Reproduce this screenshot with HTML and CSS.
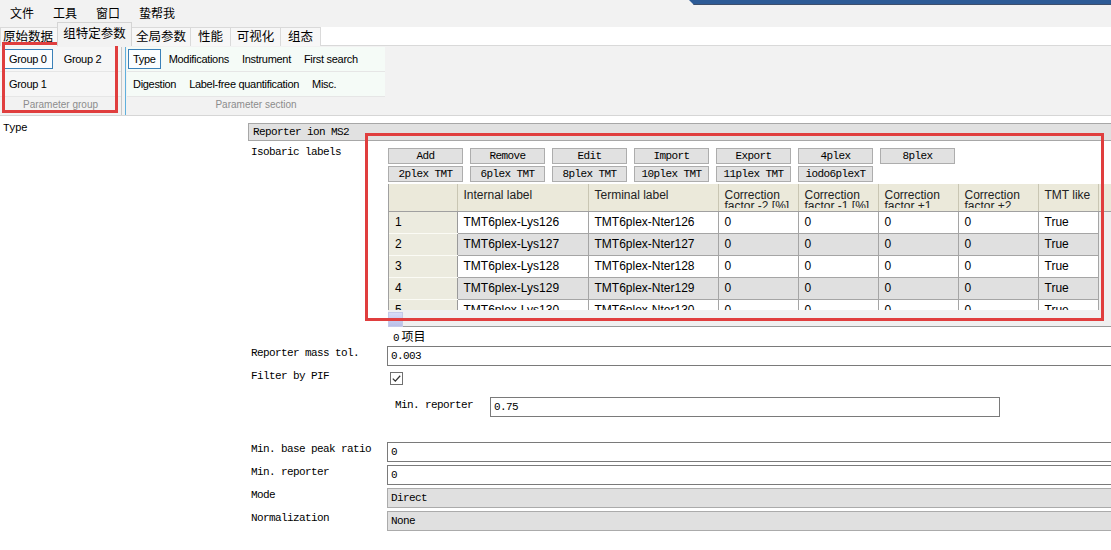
FILE: index.html
```html
<!DOCTYPE html>
<html lang="zh">
<head>
<meta charset="utf-8">
<title>Group-specific parameters</title>
<link rel="stylesheet" href="styles.css">
</head>
<body>
<div class="app">
  <div class="accent"></div>

  <div class="menubar">
    <span class="menu">文件</span>
    <span class="menu">工具</span>
    <span class="menu">窗口</span>
    <span class="menu">蛰帮我</span>
  </div>

  <div class="tabs">
    <div class="tab w1">原始数据</div>
    <div class="tab active w2">组特定参数</div>
    <div class="tab w3">全局参数</div>
    <div class="tab w4">性能</div>
    <div class="tab w5">可视化</div>
    <div class="tab w6">组态</div>
  </div>

  <div class="ribbon">
    <div class="rgroup group-panel">
      <div class="rrow">
        <span class="ritem sel">Group 0</span>
        <span class="ritem">Group 2</span>
      </div>
      <div class="rrow">
        <span class="ritem">Group 1</span>
      </div>
      <div class="rcaption">Parameter group</div>
    </div>
    <div class="rsep"></div>
    <div class="rgroup section-panel">
      <div class="rrow">
        <span class="ritem sel">Type</span>
        <span class="ritem">Modifications</span>
        <span class="ritem">Instrument</span>
        <span class="ritem">First search</span>
      </div>
      <div class="rrow">
        <span class="ritem">Digestion</span>
        <span class="ritem">Label-free quantification</span>
        <span class="ritem">Misc.</span>
      </div>
      <div class="rcaption">Parameter section</div>
    </div>
  </div>

  <div class="content">
    <div class="type-row">
      <div class="type-label">Type</div>
      <div class="field gray wide">Reporter ion MS2</div>
    </div>

    <div class="props">
      <div class="prop">
        <div class="plabel">Isobaric labels</div>
        <div class="pvalue iso">
          <div class="btnrow">
            <span class="btn">Add</span>
            <span class="btn">Remove</span>
            <span class="btn">Edit</span>
            <span class="btn">Import</span>
            <span class="btn">Export</span>
            <span class="btn">4plex</span>
            <span class="btn">8plex</span>
          </div>
          <div class="btnrow">
            <span class="btn">2plex TMT</span>
            <span class="btn">6plex TMT</span>
            <span class="btn">8plex TMT</span>
            <span class="btn">10plex TMT</span>
            <span class="btn">11plex TMT</span>
            <span class="btn">iodo6plexT</span>
          </div>
          <div class="grid">
            <table class="labels">
              <colgroup>
                <col class="c-rh"><col class="c-int"><col class="c-term">
                <col class="c-cf"><col class="c-cf"><col class="c-cf"><col class="c-cf">
                <col class="c-tmt"><col class="c-fill">
              </colgroup>
              <thead>
                <tr>
                  <th class="rh"></th>
                  <th><div class="hd">Internal label</div></th>
                  <th><div class="hd">Terminal label</div></th>
                  <th><div class="hd">Correction factor -2 [%]</div></th>
                  <th><div class="hd">Correction factor -1 [%]</div></th>
                  <th><div class="hd">Correction factor +1</div></th>
                  <th><div class="hd">Correction factor +2</div></th>
                  <th><div class="hd">TMT like</div></th>
                  <th class="fill"></th>
                </tr>
              </thead>
              <tbody>
                <tr><td class="rh">1</td><td>TMT6plex-Lys126</td><td>TMT6plex-Nter126</td><td>0</td><td>0</td><td>0</td><td>0</td><td>True</td><td class="fill"></td></tr>
                <tr class="alt"><td class="rh">2</td><td>TMT6plex-Lys127</td><td>TMT6plex-Nter127</td><td>0</td><td>0</td><td>0</td><td>0</td><td>True</td><td class="fill"></td></tr>
                <tr><td class="rh">3</td><td>TMT6plex-Lys128</td><td>TMT6plex-Nter128</td><td>0</td><td>0</td><td>0</td><td>0</td><td>True</td><td class="fill"></td></tr>
                <tr class="alt"><td class="rh">4</td><td>TMT6plex-Lys129</td><td>TMT6plex-Nter129</td><td>0</td><td>0</td><td>0</td><td>0</td><td>True</td><td class="fill"></td></tr>
                <tr><td class="rh">5</td><td>TMT6plex-Lys130</td><td>TMT6plex-Nter130</td><td>0</td><td>0</td><td>0</td><td>0</td><td>True</td><td class="fill"></td></tr>
              </tbody>
            </table>
          </div>
          <div class="hscroll"><div class="thumb"></div></div>
          <div class="count">0<span class="cjk">项目</span></div>
        </div>
      </div>

      <div class="prop">
        <div class="plabel">Reporter mass tol.</div>
        <div class="pvalue"><div class="field input wide">0.003</div></div>
      </div>

      <div class="prop pif">
        <div class="plabel">Filter by PIF</div>
        <div class="pvalue">
          <span class="check">
            <svg width="13" height="13" viewBox="0 0 13 13"><rect x="0.5" y="0.5" width="12" height="12" fill="#fff" stroke="#707070"/><path d="M2.8 6.6 L5.3 9.1 L10.2 3.8" fill="none" stroke="#333" stroke-width="1.3"/></svg>
          </span>
          <div class="subprop">
            <div class="sublabel">Min. reporter</div>
            <div class="field input sub">0.75</div>
          </div>
        </div>
      </div>

      <div class="prop gap-top">
        <div class="plabel">Min. base peak ratio</div>
        <div class="pvalue"><div class="field input wide">0</div></div>
      </div>
      <div class="prop">
        <div class="plabel">Min. reporter</div>
        <div class="pvalue"><div class="field input wide">0</div></div>
      </div>
      <div class="prop">
        <div class="plabel">Mode</div>
        <div class="pvalue"><div class="field combo wide">Direct</div></div>
      </div>
      <div class="prop">
        <div class="plabel">Normalization</div>
        <div class="pvalue"><div class="field combo wide">None</div></div>
      </div>
    </div>
  </div>

  <div class="annot annot-group"></div>
  <div class="annot annot-table"></div>
</div>
</body>
</html>
```

FILE: styles.css
```css
* { box-sizing: border-box; }

body {
  margin: 0;
  background: #fff;
  font-family: "Liberation Sans", Arial, sans-serif;
  color: #000;
}

.app {
  position: relative;
  width: 1111px;
  height: 550px;
  overflow: hidden;
  background: #fff;
}

/* window accent at the top right */
.accent {
  position: absolute;
  top: 0;
  left: 689px;
  width: 422px;
  height: 5px;
  background: #2d5b96;
  border-bottom: 1px solid #3d4f6c;
  clip-path: polygon(0 0, 100% 0, 100% 100%, 5px 100%);
}

/* menu */
.menubar {
  height: 23px;
  padding: 1px 0 0 10px;
  display: flex;
  align-items: center;
  gap: 19px;
  background: #f2f2f2;
  font: 12px "Noto Sans CJK SC", sans-serif;
}

/* tabs */
.tabs {
  height: 23px;
  display: flex;
  align-items: flex-end;
  background: linear-gradient(#f2f2f2 0 4px, #fff 4px);
  border-bottom: 1px solid #d9d9d9;
  font: 12.5px "Noto Sans CJK SC", sans-serif;
}

.tab {
  height: 19px;
  line-height: 16px;
  text-align: center;
  background: #f7f7f7;
  border: 1px solid #dadada;
  border-bottom: none;
  margin-left: -1px;
  margin-bottom: -1px;
  position: relative;
}
.tab.active {
  height: 24px;
  line-height: 20px;
  background: #f2f2f2;
  border-color: #d4d4d4;
  z-index: 1;
}
.w1 { width: 58px; margin-left: 0; text-align: left; padding-left: 2px; }
.w2 { width: 75px; }
.w3 { width: 60px; }
.w4 { width: 41px; }
.w5 { width: 51px; }
.w6 { width: 41px; }

/* ribbon */
.ribbon {
  height: 70px;
  display: flex;
  background: #f2f2f2;
  border-bottom: 1px solid #d6d6d6;
  padding-top: 1px;
  font-size: 11px;
  letter-spacing: -0.3px;
}

.rgroup {
  display: flex;
  flex-direction: column;
}

.group-panel { width: 122px; border-right: 1px solid #c8c8c8; }
.rsep { width: 4px; border-right: 1px solid #5fb0dc; margin-right: 1px; }
.section-panel { width: 258px; }

.rrow {
  height: 25px;
  display: flex;
  align-items: center;
  gap: 5px;
  padding-left: 3px;
  border-bottom: 1px solid #e6e6e6;
  background: #f6f6f6;
}
.section-panel .rrow {
  background: #f5fbf7;
  gap: 3px;
  padding-left: 1px;
}

.ritem {
  height: 20px;
  line-height: 18px;
  padding: 0 4px;
  border: 1px solid transparent;
  white-space: nowrap;
}
.group-panel .ritem { padding: 0 5px; }
.ritem.sel {
  border-color: #3b81b8;
  background: #fbfdff;
}

.rcaption {
  height: 17px;
  line-height: 15px;
  text-align: center;
  color: #8c8c8c;
  font-size: 10px;
  letter-spacing: 0;
}

/* content */
.content {
  padding-top: 6px;
  font-family: "Liberation Mono", "DejaVu Sans Mono", monospace;
  font-size: 11px;
  letter-spacing: -0.6px;
}

.type-row {
  display: flex;
  align-items: flex-start;
}
.type-label {
  width: 248px;
  padding-left: 3px;
  line-height: 12px;
}

.field {
  height: 20px;
  line-height: 18px;
  padding-left: 3px;
  border: 1px solid #7a7a7a;
  background: #fff;
  white-space: nowrap;
}
.field.wide { flex: 1; margin-right: -3px; }
.type-row .field {
  height: 18px;
  line-height: 16px;
  margin-top: 1px;
  padding-left: 4px;
}
.field.gray {
  background: #e1e1e1;
  border-color: #a7a7a7;
}
.field.combo {
  background: #e0e0e0;
  border-color: #ababab;
}

.props {
  margin-top: 4px;
  margin-left: 248px;
  display: flex;
  flex-direction: column;
  gap: 3px;
}

.prop {
  display: flex;
  align-items: flex-start;
}
.plabel {
  width: 139px;
  flex: none;
  padding-left: 3px;
  padding-top: 1px;
  line-height: 12px;
  white-space: nowrap;
}
.pvalue {
  flex: 1;
  display: flex;
  flex-direction: column;
  min-width: 0;
}

.pvalue.iso { padding-top: 3px; padding-left: 1px; }

.btnrow {
  display: flex;
  gap: 7px;
  margin-bottom: 2px;
}
.btn {
  width: 75px;
  height: 16px;
  line-height: 14px;
  text-align: center;
  background: #e1e1e1;
  border: 1px solid #adadad;
}

.grid {
  height: 126px;
  overflow: hidden;
  background: #f0f0f0;
  border-left: 1px solid #a0a0a0;
}

.labels {
  table-layout: fixed;
  border-collapse: collapse;
  width: 724px;
  font-family: "Liberation Sans", Arial, sans-serif;
  font-size: 12px;
  letter-spacing: 0;
}
.c-rh { width: 68px; }
.c-int { width: 131px; }
.c-term { width: 130px; }
.c-cf { width: 80px; }
.c-tmt { width: 60px; }
.c-fill { width: 15px; }

.labels th {
  height: 27px;
  padding: 0;
  font-weight: normal;
  text-align: left;
  vertical-align: top;
  background: #ebe9da;
  color: #222;
  border-right: 1px solid #c9c6b3;
  border-bottom: 1px solid #a0a0a0;
}
.labels .hd {
  height: 24px;
  overflow: hidden;
  padding: 6px 0 0 6px;
  line-height: 11px;
}

.labels td {
  height: 22px;
  padding: 0 0 0 6px;
  background: #fff;
  border: 1px solid #a5a5a5;
  white-space: nowrap;
  overflow: hidden;
}
.labels tr.alt td { background: #e0e0e0; }
.labels td.rh,
.labels tr.alt td.rh {
  background: #ecebdf;
  border-left: none;
  border-right: 1px solid #9a9a9a;
  border-bottom: 1px solid #fbfbf5;
}
.labels td.fill,
.labels tr.alt td.fill {
  background: #f0f0f0;
  border: none;
}
.labels th.fill { border-right: none; }

.hscroll {
  height: 17px;
  background: #f0f0f0;
  border-bottom: 1px solid #9a9a9a;
}
.thumb {
  width: 15px;
  height: 15px;
  margin-top: 2px;
  background: linear-gradient(#d8dcf6, #b9bfe8);
  border: 1px solid #c5c9e8;
}

.count {
  height: 16px;
  line-height: 17px;
  padding-left: 5px;
  letter-spacing: 0;
}
.cjk { font: 12px "Noto Sans CJK SC", sans-serif; margin-left: 2px; }

.check {
  display: block;
  width: 13px;
  height: 13px;
  margin: 3px 0 0 3px;
}
.check svg { display: block; }

.subprop {
  display: flex;
  align-items: flex-start;
  margin-top: 12px;
}
.sublabel {
  width: 103px;
  padding-left: 8px;
  padding-top: 2px;
  line-height: 12px;
}
.field.sub { width: 510px; }

.gap-top { margin-top: 22px; }

/* red annotation boxes */
.annot {
  position: absolute;
  border: 3px solid #e03e3e;
  pointer-events: none;
}
.annot-group { left: 2px; top: 42px; width: 116px; height: 71px; }
.annot-table { left: 365px; top: 133px; width: 739px; height: 188px; }
```
